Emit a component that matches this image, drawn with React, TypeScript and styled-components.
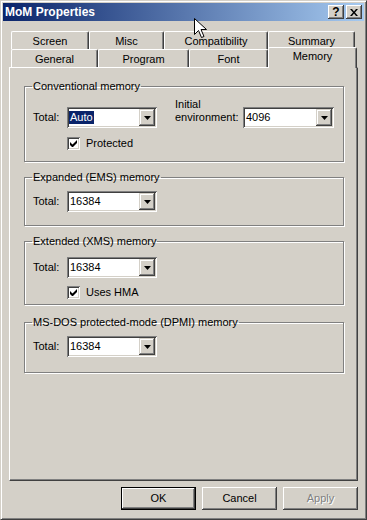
import React from 'react';
import styled, { createGlobalStyle } from 'styled-components';

const FACE = '#d4d0c8';
const SHADOW = '#808080';
const DARK = '#404040';

const GlobalStyle = createGlobalStyle`
	html, body {
		margin: 0;
		padding: 0;
		background: ${FACE};
	}
	body {
		font-family: "Liberation Sans", Arial, sans-serif;
		font-size: 11px;
		line-height: 13px;
		color: #000;
	}
`;

const Window = styled.div`
	position: relative;
	box-sizing: border-box;
	width: 367px;
	height: 520px;
	padding: 2px;
	background: ${FACE};
	border: 1px solid;
	border-color: ${FACE} ${DARK} ${DARK} ${FACE};
	box-shadow: inset 1px 1px #fff, inset -1px -1px ${SHADOW};
	display: flex;
	flex-direction: column;
`;

const TitleBar = styled.div`
	height: 18px;
	display: flex;
	align-items: center;
	padding: 0 2px;
	background: linear-gradient(to right, #0a246a, #a6caf0);
	color: #fff;
	font-weight: bold;
	font-size: 12px;
`;

const Title = styled.span`
	flex: 1;
`;

const CaptionButtons = styled.div`
	display: flex;
	gap: 2px;
`;

const CaptionButton = styled.div`
	box-sizing: border-box;
	width: 16px;
	height: 14px;
	background: ${FACE};
	box-shadow: inset -1px -1px ${DARK}, inset 1px 1px #fff, inset -2px -2px ${SHADOW};
	display: flex;
	align-items: center;
	justify-content: center;
	color: #000;
	font-size: 12px;
	font-weight: bold;
	line-height: 12px;
`;

const Body = styled.div`
	display: flex;
	flex-direction: column;
	padding: 10px 6px 0;
`;

const TabStrip = styled.div`
	padding-left: 2px;
`;

const TabRow = styled.div`
	display: flex;
	height: 18px;
`;

const Tab = styled.div<{ $w: number; $active?: boolean }>`
	position: relative;
	z-index: ${(p) => (p.$active ? 1 : 0)};
	box-sizing: border-box;
	width: ${(p) => p.$w}px;
	height: ${(p) => (p.$active ? 21 : 18)}px;
	margin-top: ${(p) => (p.$active ? -2 : 0)}px;
	padding: ${(p) => (p.$active ? '0 0 3px' : '2px 0 0')};
	background: ${FACE};
	border-top: 1px solid #fff;
	border-left: 1px solid #fff;
	border-right: 1px solid ${DARK};
	border-radius: 2px 2px 0 0;
	box-shadow: inset -1px 0 ${SHADOW};
	display: flex;
	align-items: center;
	justify-content: center;
`;

const Panel = styled.div`
	box-sizing: border-box;
	height: 414px;
	border: 1px solid;
	border-color: #fff ${DARK} ${DARK} #fff;
	box-shadow: inset -1px -1px ${SHADOW};
	padding: 12px 13px 0 14px;
	display: flex;
	flex-direction: column;
`;

const Group = styled.fieldset<{ $h: number; $mt: number; $pt: number }>`
	box-sizing: border-box;
	min-width: 0;
	height: ${(p) => p.$h}px;
	margin: ${(p) => p.$mt}px 0 0;
	padding: ${(p) => p.$pt}px 8px 0;
	border: 1px solid ${SHADOW};
	box-shadow: inset 1px 1px #fff, 1px 1px #fff;
`;

const Legend = styled.legend`
	padding: 0 1px;
	margin-left: -1px;
	line-height: 13px;
`;

const Row = styled.div<{ $mt?: number }>`
	display: flex;
	align-items: flex-end;
	margin-top: ${(p) => p.$mt ?? 0}px;
`;

const FieldLabel = styled.span`
	width: 34px;
	line-height: 21px;
`;

const TwoLineLabel = styled.span`
	width: 68px;
	margin: 0 0 4px 18px;
`;

const Combo = styled.div<{ $w: number }>`
	box-sizing: border-box;
	width: ${(p) => p.$w}px;
	height: 21px;
	padding: 2px;
	display: flex;
	background: #fff;
	box-shadow: inset 1px 1px ${SHADOW}, inset -1px -1px #fff, inset 2px 2px ${DARK},
		inset -2px -2px ${FACE};
`;

const ComboText = styled.div`
	flex: 1;
	display: flex;
	align-items: center;
`;

const Value = styled.span<{ $selected?: boolean }>`
	padding: 0 1px;
	line-height: 13px;
	background: ${(p) => (p.$selected ? '#0a246a' : 'transparent')};
	color: ${(p) => (p.$selected ? '#fff' : '#000')};
`;

const DropButton = styled.div`
	box-sizing: border-box;
	width: 16px;
	height: 17px;
	background: ${FACE};
	box-shadow: inset -1px -1px ${DARK}, inset 1px 1px ${FACE}, inset -2px -2px ${SHADOW},
		inset 2px 2px #fff;
	display: flex;
	align-items: center;
	justify-content: center;
`;

const CheckRow = styled.label<{ $mt: number }>`
	display: flex;
	align-items: center;
	gap: 6px;
	margin: ${(p) => p.$mt}px 0 0 34px;
`;

const CheckBox = styled.span`
	box-sizing: border-box;
	width: 13px;
	height: 13px;
	background: #fff;
	box-shadow: inset 1px 1px ${SHADOW}, inset -1px -1px #fff, inset 2px 2px ${DARK},
		inset -2px -2px ${FACE};
	display: flex;
	align-items: center;
	justify-content: center;
`;

const ButtonRow = styled.div`
	display: flex;
	justify-content: flex-end;
	gap: 6px;
	margin-top: 6px;
`;

const PushButton = styled.div<{ $default?: boolean; $disabled?: boolean }>`
	box-sizing: border-box;
	width: 75px;
	height: 23px;
	background: ${FACE};
	border: ${(p) => (p.$default ? '1px solid #000' : 'none')};
	box-shadow: inset -1px -1px ${DARK}, inset 1px 1px #fff, inset -2px -2px ${SHADOW},
		inset 2px 2px ${FACE};
	display: flex;
	align-items: center;
	justify-content: center;
	color: ${(p) => (p.$disabled ? SHADOW : '#000')};
	text-shadow: ${(p) => (p.$disabled ? '1px 1px #fff' : 'none')};
`;

const Cursor = styled.svg`
	position: absolute;
	left: 193px;
	top: 17px;
`;

function Arrow() {
	return (
		<svg width="7" height="4" viewBox="0 0 7 4">
			<path d="M0 0h7L3.5 4z" fill="#000" />
		</svg>
	);
}

function Check() {
	return (
		<svg width="7" height="7" viewBox="0 0 7 7">
			<path d="M0 2v3l2 2h1l4-4V0L2.5 4.5z" fill="#000" />
		</svg>
	);
}

function ComboBox({ w, value, selected }: { w: number; value: string; selected?: boolean }) {
	return (
		<Combo $w={w}>
			<ComboText>
				<Value $selected={selected}>{value}</Value>
			</ComboText>
			<DropButton>
				<Arrow />
			</DropButton>
		</Combo>
	);
}

function CheckOption({ label, mt }: { label: string; mt: number }) {
	return (
		<CheckRow $mt={mt}>
			<CheckBox>
				<Check />
			</CheckBox>
			{label}
		</CheckRow>
	);
}

const topTabs = [
	{ label: 'Screen', w: 78 },
	{ label: 'Misc', w: 75 },
	{ label: 'Compatibility', w: 104 },
	{ label: 'Summary', w: 87 },
];

const frontTabs = [
	{ label: 'General', w: 87 },
	{ label: 'Program', w: 91 },
	{ label: 'Font', w: 79 },
	{ label: 'Memory', w: 89, active: true },
];

export default function App() {
	return (
		<>
			<GlobalStyle />
			<Window>
				<TitleBar>
					<Title>MoM Properties</Title>
					<CaptionButtons>
						<CaptionButton>?</CaptionButton>
						<CaptionButton>
							<svg width="8" height="7" viewBox="0 0 8 7">
								<path d="M0 0h2l2 2.4L6 0h2L5 3.5 8 7H6L4 4.6 2 7H0l3-3.5z" fill="#000" />
							</svg>
						</CaptionButton>
					</CaptionButtons>
				</TitleBar>

				<Body>
					<TabStrip>
						<TabRow>
							{topTabs.map((t) => (
								<Tab key={t.label} $w={t.w}>
									{t.label}
								</Tab>
							))}
						</TabRow>
						<TabRow>
							{frontTabs.map((t) => (
								<Tab key={t.label} $w={t.w} $active={t.active}>
									{t.label}
								</Tab>
							))}
						</TabRow>
					</TabStrip>

					<Panel>
						<Group $h={82} $mt={0} $pt={5}>
							<Legend>Conventional memory</Legend>
							<Row>
								<FieldLabel>Total:</FieldLabel>
								<ComboBox w={90} value="Auto" selected />
								<TwoLineLabel>
									Initial
									<br />
									environment:
								</TwoLineLabel>
								<ComboBox w={91} value="4096" />
							</Row>
							<CheckOption label="Protected" mt={9} />
						</Group>

						<Group $h={55} $mt={9} $pt={7}>
							<Legend>Expanded (EMS) memory</Legend>
							<Row>
								<FieldLabel>Total:</FieldLabel>
								<ComboBox w={90} value="16384" />
							</Row>
						</Group>

						<Group $h={70} $mt={9} $pt={9}>
							<Legend>Extended (XMS) memory</Legend>
							<Row>
								<FieldLabel>Total:</FieldLabel>
								<ComboBox w={90} value="16384" />
							</Row>
							<CheckOption label="Uses HMA" mt={8} />
						</Group>

						<Group $h={57} $mt={11} $pt={7}>
							<Legend>MS-DOS protected-mode (DPMI) memory</Legend>
							<Row>
								<FieldLabel>Total:</FieldLabel>
								<ComboBox w={90} value="16384" />
							</Row>
						</Group>
					</Panel>

					<ButtonRow>
						<PushButton $default>OK</PushButton>
						<PushButton>Cancel</PushButton>
						<PushButton $disabled>Apply</PushButton>
					</ButtonRow>
				</Body>

				<Cursor width="13" height="21" viewBox="0 0 13 21">
					<path
						d="M0.5 0.5v16l4-4 3 7 2.5-1-3-7h5.5z"
						fill="#fff"
						stroke="#000"
						strokeWidth="1"
						strokeLinejoin="miter"
					/>
				</Cursor>
			</Window>
		</>
	);
}
